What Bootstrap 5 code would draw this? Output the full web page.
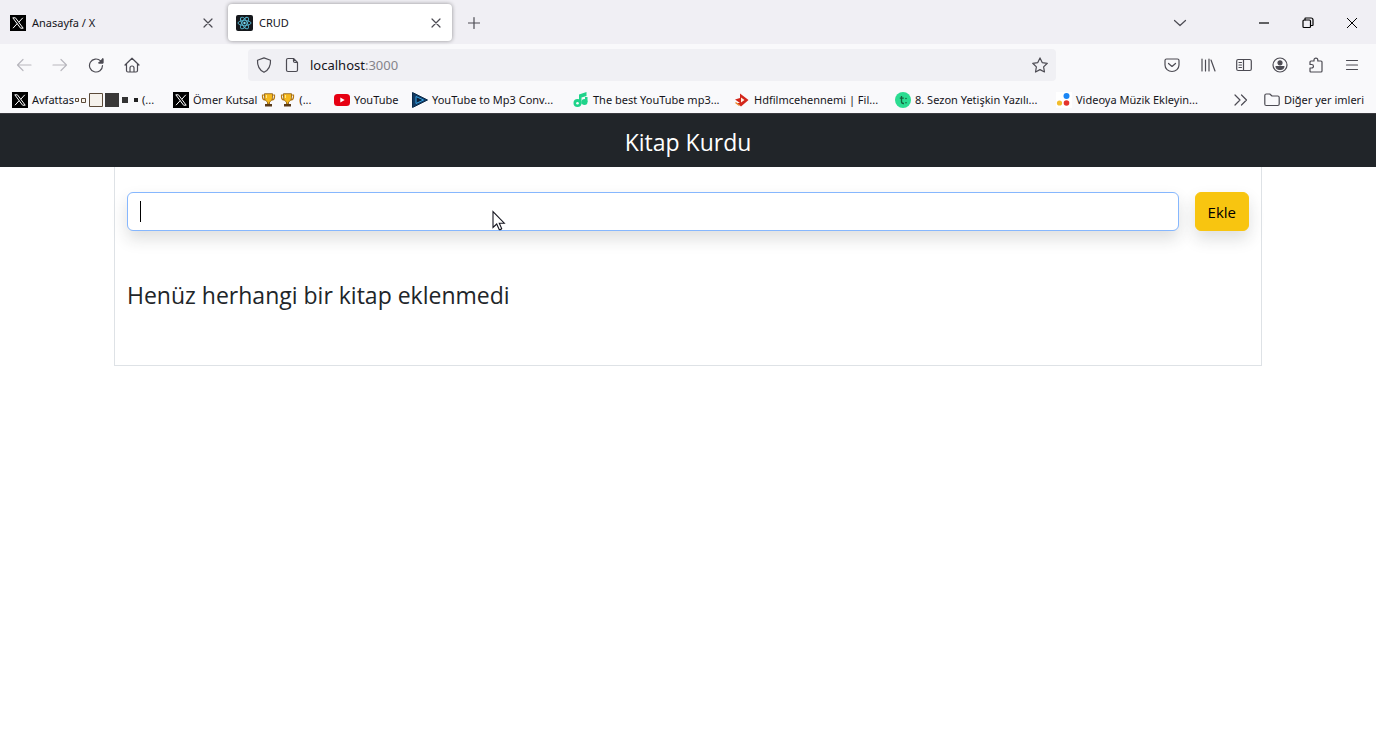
<!DOCTYPE html>
<html lang="tr">
<head>
<meta charset="utf-8">
<meta name="viewport" content="width=device-width, initial-scale=1">
<title>CRUD</title>
<link href="https://cdn.jsdelivr.net/npm/bootstrap@5.3.0/dist/css/bootstrap.min.css" rel="stylesheet">
<style>
  body { font-family: "Open Sans", "Noto Sans", sans-serif; background: #fff; }
  svg { display: block; flex: none; }
  .chrome { font-family: "Noto Sans", "Open Sans", sans-serif; color: #15141a; font-size: 11px; line-height: 16px; border-bottom: 1px solid #3a3a3f; background: #f9f9fb; }
  .chrome button { border: 0; background: none; padding: 0; color: #4c4b53; }
  .chrome a { color: inherit; text-decoration: none; white-space: nowrap; }
  .line { fill: none; stroke: currentColor; stroke-width: 1.2; stroke-linecap: round; stroke-linejoin: round; }
  .tabs { height: 44px; padding-top: 1px; background: #f0eff4; }
  .tab-item { width: 224px; height: 37px; border-radius: 4px; padding: 0 8px 0 10px; gap: 6px; }
  .tab-item.current { background: #fff; box-shadow: 0 0 4px rgba(0,0,0,.4); padding-left: 8px; }
  .tools { height: 42px; }
  .nav-buttons { width: 248px; padding-left: 16px; gap: 20px; }
  .address { flex: 1 1 auto; height: 32px; border-radius: 4px; background: #f0f0f4; padding: 0 8px; }
  .url { font-size: 13px; line-height: 18px; margin-left: 10px; }
  .url span { color: #85848b; }
  .tool-icons { width: 320px; gap: 20px; padding-right: 16px; }
  .marks { height: 27px; padding-left: 12px; }
  .mark-item { flex: 0 0 161px; gap: 4px; }
  .mark-item.short { flex-basis: 78px; }
  .brand-bar { height: 53px; padding-top: 2px; background: #212529; color: #fff; }
  .title-text { font-size: 23px; line-height: 32px; font-weight: 400; margin: 0; }
  .board { max-width: 1148px; padding: 25px 12px 54px; border: 1px solid #dee2e6; border-top: 0; }
  .book-input { height: 39px; border-color: #86b7fe; }
  .add-btn { height: 39px; font-size: 15px; padding: 1px 12px 0; background: #f8c510; border-color: #f8c510; color: #000; }
  .caret { position: absolute; left: 13px; top: 9px; width: 1px; height: 21px; background: #000; }
  .pointer { position: absolute; left: 365px; top: 18px; }
</style>
</head>
<body>
<svg width="0" height="0" class="position-absolute" aria-hidden="true">
  <symbol id="x-logo" viewBox="0 0 16 16"><rect width="16" height="16" fill="#000"/><path d="M2.800 2.800h2.600l7.800 10.400h-2.600zM12.800 2.800 8.800 7.200M3 13.200l4.200-4.600" fill="none" stroke="#fff" stroke-width="1"/></symbol>
  <symbol id="close" viewBox="0 0 16 16"><path d="m4 4 8 8M12 4l-8 8" stroke="currentColor" stroke-width="1.200" stroke-linecap="round"/></symbol>
  <symbol id="trophy" viewBox="0 0 14 14"><path d="M3 2H1v2c0 2 1 3 3 3M11 2h2v2c0 2-1 3-3 3" fill="none" stroke="#b97a10" stroke-width="1.200"/><path d="M3 .7h8v4C11 7 9 8.500 8 9v2H6V9C5 8.500 3 7 3 4.700z" fill="#f6b91c" stroke="#8a5a10" stroke-width=".8"/><path d="M5 2v3" stroke="#ffe68a"/><path d="M3.500 11h7v2.500h-7z" fill="#5a3a18"/></symbol>
</svg>

<div class="chrome">
  <div class="tabs d-flex align-items-center">
    <div class="tab-item d-flex align-items-center me-1">
      <svg width="16" height="16"><use href="#x-logo"/></svg>
      <span class="flex-grow-1">Anasayfa / X</span>
      <button type="button" aria-label="Sekmeyi kapat"><svg width="16" height="16"><use href="#close"/></svg></button>
    </div>
    <div class="tab-item current d-flex align-items-center">
      <svg width="17" height="16" viewBox="0 0 17 16"><rect width="17" height="16" rx="2" fill="#15181c"/><g fill="none" stroke="#58b9d3" stroke-width=".9"><ellipse cx="8.500" cy="8" rx="6.500" ry="2.500"/><ellipse cx="8.500" cy="8" rx="6.500" ry="2.500" transform="rotate(60 8.500 8)"/><ellipse cx="8.500" cy="8" rx="6.500" ry="2.500" transform="rotate(120 8.500 8)"/></g><circle cx="8.500" cy="8" r="1.200" fill="#7bd8ee"/></svg>
      <span class="flex-grow-1">CRUD</span>
      <button type="button" aria-label="Sekmeyi kapat"><svg width="16" height="16"><use href="#close"/></svg></button>
    </div>
    <button type="button" class="ms-3" aria-label="Yeni sekme"><svg width="12" height="14" viewBox="1 0 12 14" class="line"><path d="M7 1.500v11M1.500 7h11"/></svg></button>
    <div class="ms-auto d-flex align-items-center text-dark">
      <button type="button" class="me-5" aria-label="Sekmeleri listele"><svg width="16" height="16" viewBox="0 0 16 16" class="line"><path d="m2.500 5.500 5.500 5 5.500-5"/></svg></button>
      <div class="d-flex gap-4 ms-3 me-3 ps-1">
        <button type="button" class="text-black me-1" aria-label="Küçült"><svg width="16" height="16" viewBox="0 0 16 16"><path d="M3 8h10" stroke="currentColor" stroke-width="1.200"/></svg></button>
        <button type="button" class="text-black me-1" aria-label="Geri yükle"><svg width="16" height="16" viewBox="0 0 16 16" class="line"><rect x="3" y="5" width="7.500" height="7.500" rx="1"/><path d="M5 5V3.500q0-.5.5-.5H11q2 0 2 2v5q0 .5-.5.5h-2"/></svg></button>
        <button type="button" class="text-black" aria-label="Kapat"><svg width="16" height="16" viewBox="0 0 16 16"><path d="m3 3 10 10M13 3 3 13" stroke="currentColor"/></svg></button>
      </div>
    </div>
  </div>

  <div class="tools d-flex align-items-center">
    <div class="nav-buttons d-flex">
      <button type="button" aria-label="Geri"><svg width="16" height="16" viewBox="0 0 16 16" class="line" color="#b9b8be"><path d="M15 8H2M7 2.500 1.500 8 7 13.500"/></svg></button>
      <button type="button" aria-label="İleri"><svg width="16" height="16" viewBox="0 0 16 16" class="line" color="#b9b8be"><path d="M1 8h13M9 2.500 14.500 8 9 13.500"/></svg></button>
      <button type="button" aria-label="Yenile"><svg width="16" height="16" viewBox="0 0 16 16" class="line"><path d="M14.500 8.500A6.500 6.500 0 1 1 12.600 3.900L14 5.500M14.800 1.800v4h-4" /><path d="M14.800 2v3.800H11z" fill="currentColor"/></svg></button>
      <button type="button" aria-label="Ana sayfa"><svg width="16" height="16" viewBox="0 0 16 16" class="line"><path d="M1 8 8 1.200 15 8M2.500 7v6.500q0 1.500 1.500 1.500h8q1.500 0 1.500-1.500V7M6 15v-4q0-2 2-2t2 2v4"/></svg></button>
    </div>
    <div class="address d-flex align-items-center">
      <button type="button" aria-label="İzlenme koruması"><svg width="16" height="16" viewBox="0 0 16 16" class="line"><path d="M8 .9 14.500 3.200C14.800 9 12.500 13 8 15.300 3.500 13 1.200 9 1.500 3.200z"/></svg></button>
      <button type="button" class="ms-2 ps-1" aria-label="Site bilgileri"><svg width="16" height="16" viewBox="0 0 16 16" class="line"><path d="M9.500 1.500H4q-1.500 0-1.500 1.500v10q0 1.500 1.500 1.500h8q1.500 0 1.500-1.500V5.500zV4q0 1.500 1.500 1.500h2.500"/></svg></button>
      <a href="#" class="url flex-grow-1">localhost<span>:3000</span></a>
      <button type="button" aria-label="Yer imi ekle"><svg width="16" height="16" viewBox="0 0 16 16" class="line"><path d="m8 .9 2.200 4.700 5.100.7-3.700 3.600.9 5.100L8 12.600 3.500 15l.9-5.100L.7 6.300l5.100-.7z"/></svg></button>
    </div>
    <div class="tool-icons d-flex justify-content-end">
      <button type="button" aria-label="Pocket"><svg width="16" height="16" viewBox="0 0 16 16" class="line"><path d="M2.500 2h11Q15 2 15 3.500V8a7 6.500 0 0 1-14 0V3.500Q1 2 2.500 2zM4.500 6.500 8 9.500l3.500-3"/></svg></button>
      <button type="button" aria-label="Kitaplık"><svg width="16" height="16" viewBox="0 0 16 16" class="line"><path d="M2 2v12M5.500 3v11M9 2v12M11 3l4 11"/></svg></button>
      <button type="button" aria-label="Kenar çubuğu"><svg width="16" height="16" viewBox="0 0 16 16" class="line"><rect x=".7" y="2.500" width="14.600" height="11" rx="1.500"/><path d="M7.500 2.500v11M3 5.500h2.500M3 8h2.500M3 10.500h2.500"/></svg></button>
      <button type="button" aria-label="Hesap"><svg width="16" height="16" viewBox="0 0 16 16" class="line"><circle cx="8" cy="8" r="7"/><circle cx="8" cy="5.800" r="2" fill="currentColor"/><path d="M4 9.500h8q-.5 3-4 3t-4-3z" fill="currentColor"/></svg></button>
      <button type="button" aria-label="Uzantılar"><svg width="16" height="16" viewBox="0 0 16 16" class="line"><path d="M6 4V3a1.900 1.900 0 0 1 3.800 0v1H13q1 0 1 1v9q0 1-1 1H3q-1 0-1-1v-3h1.700a1.700 1.700 0 0 0 0-3.500H2V5q0-1 1-1z"/></svg></button>
      <button type="button" aria-label="Menü"><svg width="16" height="16" viewBox="0 0 16 16" class="line"><path d="M2.500 3.500h11M2.500 8h11M2.500 12.500h11"/></svg></button>
    </div>
  </div>

  <nav class="marks d-flex align-items-center" aria-label="Yer imleri">
    <a href="#" class="mark-item d-flex align-items-center"><svg width="16" height="16"><use href="#x-logo"/></svg><span class="d-flex align-items-center">Avfattas<svg width="56" height="14" viewBox="0 0 56 14" class="me-1"><g fill="#f6f2ec" stroke="#5c4a38"><path d="M1.500 5.500h3v3h-3zM7.500 5.500h4v4h-4z"/><path d="M15.500.5h13v13h-13z"/></g><path d="M31 0h14v14H31z" fill="#3a3838"/><path d="M48 4h6v6h-6z" fill="#333"/></svg><svg width="4" height="4" class="me-1"><path d="M0 0h4v4H0z" fill="#222"/></svg>(...</span></a>
    <a href="#" class="mark-item d-flex align-items-center"><svg width="16" height="16"><use href="#x-logo"/></svg><span class="d-flex align-items-center gap-1">Ömer Kutsal <svg width="15" height="14"><use href="#trophy"/></svg><svg width="15" height="14"><use href="#trophy"/></svg>(...</span></a>
    <a href="#" class="mark-item short d-flex align-items-center"><svg width="16" height="16" viewBox="0 0 16 16"><rect y="2" width="16" height="12" rx="3.500" fill="#e60012"/><path d="m6.300 5.500 4.400 2.500-4.400 2.500z" fill="#fff"/></svg><span>YouTube</span></a>
    <a href="#" class="mark-item d-flex align-items-center"><svg width="16" height="16" viewBox="0 0 16 16"><path d="M.5.500 15.500 8 .5 15.500z" fill="#123a63" stroke="#0b2a4a"/><path d="M4 4.500 11.500 8 4 11.500z" fill="#0d2038" stroke="#37a5e8"/></svg><span>YouTube to Mp3 Conv...</span></a>
    <a href="#" class="mark-item d-flex align-items-center"><svg width="16" height="16" viewBox="0 0 16 16" fill="#1fd38a"><path d="M6 2.500 13.500 0v4L8.500 5.500V12H6z"/><circle cx="4.500" cy="11" r="4"/><circle cx="11.500" cy="10" r="3"/><path d="M12 5h2.500v5H12z"/><circle cx="4.500" cy="11.200" r="1.300" fill="#f9f9fb"/></svg><span>The best YouTube mp3...</span></a>
    <a href="#" class="mark-item d-flex align-items-center"><svg width="16" height="16" viewBox="0 0 16 16"><path d="M6 1.500 14.500 8 7 14.500 3 11h3L1 7.500 6 6z" fill="#d3261b"/><path d="M7 5.500 10.500 8 7 10.500z" fill="#fff0e0"/><path d="m1.500 10.500 4 3" stroke="#e8882c" stroke-width="1.500"/></svg><span>Hdfilmcehennemi | Fil...</span></a>
    <a href="#" class="mark-item d-flex align-items-center"><svg width="16" height="16" viewBox="0 0 16 16"><circle cx="8" cy="8" r="8" fill="#2bdc91"/><path d="M6.500 4v5.500q0 2 2 2H9M4.800 6.200h4" stroke="#14633f" stroke-width="1.300" fill="none"/><circle cx="11" cy="6.500" r=".8" fill="#14633f"/><circle cx="11" cy="10.800" r=".8" fill="#14633f"/></svg><span>8. Sezon Yetişkin Yazılı...</span></a>
    <a href="#" class="mark-item d-flex align-items-center"><svg width="16" height="16" viewBox="0 0 16 16"><path fill="#fff" d="M0 0h16v16H0z"/><circle cx="10.500" cy="4" r="3" fill="#1a86f5"/><circle cx="3.500" cy="11" r="2.600" fill="#f2bd2c"/><circle cx="10.500" cy="11" r="2.800" fill="#e5332d"/></svg><span>Videoya Müzik Ekleyin...</span></a>
    <div class="ms-auto me-2 pe-1 d-flex align-items-center gap-3">
      <button type="button" aria-label="Diğer"><svg width="14" height="14" viewBox="0 0 14 14" class="line"><path d="M1 2l5 5-5 5M7.500 2l5 5-5 5"/></svg></button>
      <a href="#" class="d-flex align-items-center gap-1"><svg width="16" height="16" viewBox="0 0 16 16" class="line" color="#4c4b53"><path d="M.8 3.500Q.8 2 2.300 2h3.500L8 4h5.700q1.500 0 1.500 1.500V12q0 1.500-1.500 1.500H2.300Q.8 13.500.8 12z"/></svg><span>Diğer yer imleri</span></a>
    </div>
  </nav>
</div>

<header class="brand-bar d-flex align-items-center justify-content-center"><h1 class="title-text">Kitap Kurdu</h1></header>

<main class="board mx-auto">
  <form class="d-flex gap-3">
    <div class="position-relative flex-grow-1">
      <input type="text" class="form-control book-input shadow" aria-label="Kitap adı">
      <span class="caret"></span>
      <svg class="pointer" width="14" height="22" viewBox="0 0 14 22"><path d="M1 1.500v16l3.700-3.500 2.500 5.500q1.500.5 2.500-.9L7.300 13.200h5z" fill="#fff" stroke="#15151f" stroke-width="1.100"/></svg>
    </div>
    <button type="button" class="btn add-btn shadow">Ekle</button>
  </form>
  <h2 class="title-text mt-5">Henüz herhangi bir kitap eklenmedi</h2>
</main>
<script src="https://cdn.jsdelivr.net/npm/bootstrap@5.3.0/dist/js/bootstrap.bundle.min.js"></script>
</body>
</html>
